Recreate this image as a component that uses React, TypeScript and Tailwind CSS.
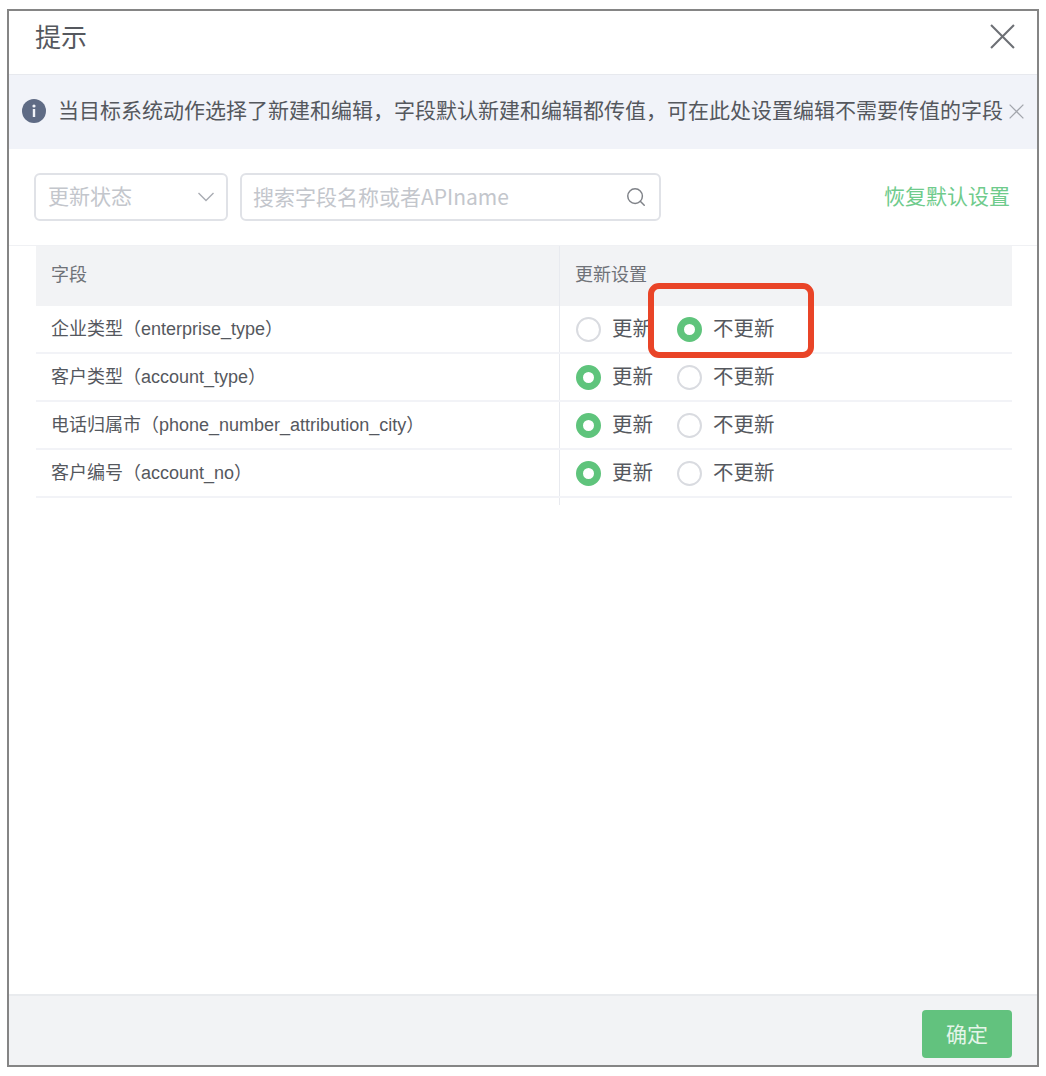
import { Search } from "lucide-react"

const rows = [
  { name: "企业类型（enterprise_type）", update: false },
  { name: "客户类型（account_type）", update: true },
  { name: "电话归属市（phone_number_attribution_city）", update: true },
  { name: "客户编号（account_no）", update: true },
]

function Radio({ checked, label }: { checked: boolean; label: string }) {
  return (
    <div className="flex items-center">
      <span
        className={
          checked
            ? "w-[25px] h-[25px] rounded-full bg-white border-[7px] border-[#5fc47c]"
            : "w-[25px] h-[25px] rounded-full bg-white border-2 border-[#d9dbe0]"
        }
      />
      <span className="ml-[11px] text-[20.5px] text-[#55585e]">{label}</span>
    </div>
  )
}

function CloseIcon({ className }: { className: string }) {
  return (
    <svg viewBox="0 0 24 24" fill="none" stroke="currentColor" strokeWidth="2" className={className}>
      <path d="M1 1 L23 23 M23 1 L1 23" />
    </svg>
  )
}

export default function App() {
  return (
    <div className="min-h-[1076px] bg-white pt-[9px] pl-[7px] font-['Liberation_Sans','Noto_Sans_CJK_SC',sans-serif]">
      <div className="relative flex flex-col w-[1032px] h-[1058px] bg-white border-2 border-[#858585]">
        <div className="flex items-start justify-between h-[63px] pt-[14px] pl-[26px] pr-[22px] shrink-0">
          <span className="text-[26px] leading-[26px] text-[#55585e]">提示</span>
          <CloseIcon className="-mt-px w-[25px] h-[25px] text-[#6d7075]" />
        </div>

        <div className="flex items-center h-[75px] shrink-0 pl-[13px] pb-[2px] bg-[#f1f3f9] border-t border-[#e7e9ee]">
          <svg viewBox="0 0 24 24" className="w-6 h-6 shrink-0">
            <circle cx="12" cy="12" r="12" fill="#5f6b85" />
            <circle cx="12" cy="7" r="1.6" fill="#f1f3f9" />
            <rect x="10.8" y="10" width="2.4" height="8" fill="#f1f3f9" />
          </svg>
          <span className="ml-[12px] text-[21px] whitespace-nowrap text-[#55585e]">
            当目标系统动作选择了新建和编辑，字段默认新建和编辑都传值，可在此处设置编辑不需要传值的字段
          </span>
          <CloseIcon className="ml-[6px] w-[15px] h-[15px] text-[#a3a6ad]" />
        </div>

        <div className="flex items-center h-[97px] shrink-0 pl-[25px] pr-[27px] border-b border-[#f0f1f4]">
          <div className="flex items-center justify-between w-[194px] h-[48px] pl-[12px] pr-[11px] border-2 border-[#e0e2e7] rounded-md">
            <span className="text-[21px] text-[#c3c6cc]">更新状态</span>
            <svg viewBox="0 0 18 10" fill="none" stroke="#a9acb3" strokeWidth="1.4" className="w-[18px] h-[10px]">
              <path d="M1.5 1 L9 8.5 L16.5 1" />
            </svg>
          </div>
          <div className="flex items-center justify-between w-[421px] h-[48px] ml-[12px] pl-[11px] pr-[12px] border-2 border-[#e0e2e7] rounded-md">
            <span className="text-[21px] text-[#c3c6cc] font-['Noto_Sans_CJK_SC',sans-serif]">搜索字段名称或者APIname</span>
            <Search size={22} strokeWidth={1.6} className="text-[#7f8288]" />
          </div>
          <span className="ml-auto text-[21px] text-[#6fcb8c]">恢复默认设置</span>
        </div>

        <div className="flex-1 pl-[27px] pr-[25px]">
          <div className="flex h-[60px] bg-[#f2f3f5] text-[18px] text-[#6f7278]">
            <div className="flex items-center w-[524px] pl-[15px] pb-[2px] border-r border-[#e8eaef]">字段</div>
            <div className="flex items-center pl-[15px] pb-[2px]">更新设置</div>
          </div>
          {rows.map((row) => (
            <div key={row.name} className="flex h-[48px] border-b-2 border-[#f2f3f7]">
              <div className="flex items-center w-[524px] pl-[15px] border-r border-[#e8eaef] text-[18px] text-[#55585e] whitespace-nowrap">
                {row.name}
              </div>
              <div className="flex items-center gap-6 pl-[16px]">
                <Radio checked={row.update} label="更新" />
                <Radio checked={!row.update} label="不更新" />
              </div>
            </div>
          ))}
          <div className="w-[524px] h-[7px] border-r border-[#e8eaef]" />
        </div>

        <div className="flex justify-end items-start h-[71px] shrink-0 pt-[14px] pr-[25px] bg-[#f2f3f5] border-t-2 border-[#e9ebee]">
          <div className="flex items-center justify-center w-[90px] h-[48px] pt-px rounded bg-[#62c27e] text-[21px] text-[#e4f5e9]">
            确定
          </div>
        </div>

        {/* red highlight box drawn over the table */}
        <div className="absolute left-[639px] top-[272px] w-[166px] h-[75px] border-[6px] border-[#e94427] rounded-[11px]" />
      </div>
    </div>
  )
}
